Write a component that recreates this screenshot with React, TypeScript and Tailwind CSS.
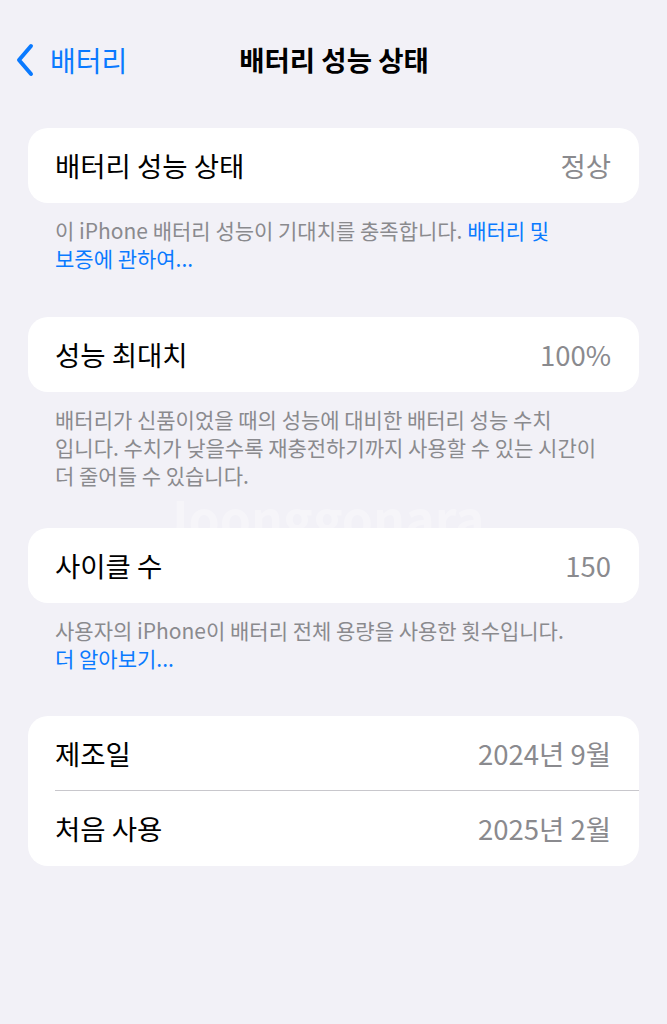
import React from "react";

const font = { fontFamily: '"Noto Sans CJK KR", "Noto Sans", sans-serif' };

function Row({ label, value, divider }: { label: string; value: string; divider?: boolean }) {
  return (
    <div className="relative flex h-[75px] items-center justify-between pl-[27px] pr-[28px]">
      <span className="text-[27.5px] text-black">{label}</span>
      <span className="text-[27.5px] text-[#8a8a8e]">{value}</span>
      {divider && <div className="absolute bottom-0 left-[27px] right-0 h-px bg-[#c8c7cc]" />}
    </div>
  );
}

function Footer({ children }: { children: React.ReactNode }) {
  return (
    <div className="px-[55px] pt-[13px] text-[21px] leading-[28px] text-[#8a8a8e]">{children}</div>
  );
}

export default function App() {
  return (
    <div className="relative min-h-[1024px] w-full bg-[#f2f1f7]" style={font}>
      {/* navigation bar */}
      <div className="relative flex h-[120px] items-start pt-[40px]">
        <div className="flex h-[40px] items-center pl-[14px] text-[#0a7aff]">
          <svg width="22" height="34" viewBox="0 0 22 34" fill="none">
            <path d="M17 3 L5 17 L17 31" stroke="#0a7aff" strokeWidth="4" strokeLinecap="round" strokeLinejoin="round" />
          </svg>
          <span className="ml-[14px] text-[28px]">배터리</span>
        </div>
        <div className="absolute left-0 right-0 top-[40px] flex h-[40px] items-center justify-center pl-[1px]">
          <span className="text-[27.5px] font-bold text-black">배터리 성능 상태</span>
        </div>
      </div>

      <div className="px-[28px] pt-[8px]">
        <div className="overflow-hidden rounded-[20px] bg-white">
          <Row label="배터리 성능 상태" value="정상" />
        </div>
      </div>
      <Footer>
        이 iPhone 배터리 성능이 기대치를 충족합니다. <span className="text-[#0a7aff]">배터리 및<br />보증에 관하여...</span>
      </Footer>

      <div className="px-[28px] pt-[45px]">
        <div className="overflow-hidden rounded-[20px] bg-white">
          <Row label="성능 최대치" value="100%" />
        </div>
      </div>
      <Footer>
        배터리가 신품이었을 때의 성능에 대비한 배터리 성능 수치
        <br />
        입니다. 수치가 낮을수록 재충전하기까지 사용할 수 있는 시간이
        <br />더 줄어들 수 있습니다.
      </Footer>

      <div className="px-[28px] pt-[39px]">
        <div className="overflow-hidden rounded-[20px] bg-white">
          <Row label="사이클 수" value="150" />
        </div>
      </div>
      <Footer>
        사용자의 iPhone이 배터리 전체 용량을 사용한 횟수입니다.
        <br />
        <span className="text-[#0a7aff]">더 알아보기...</span>
      </Footer>

      <div className="px-[28px] pt-[44px]">
        <div className="overflow-hidden rounded-[20px] bg-white">
          <Row label="제조일" value="2024년 9월" divider />
          <Row label="처음 사용" value="2025년 2월" />
        </div>
      </div>

      {/* faint watermark */}
      <div className="pointer-events-none absolute left-[160px] top-[491px] text-[50px] font-bold leading-none text-white/30">
        Joonggonara
      </div>
    </div>
  );
}
